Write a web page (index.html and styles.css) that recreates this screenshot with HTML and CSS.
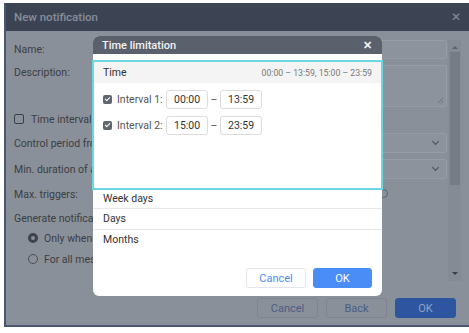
FILE: index.html
```html
<!DOCTYPE html>
<html lang="en">
<head>
    <meta charset="UTF-8">
    <title>New notification</title>
    <link rel="stylesheet" href="styles.css">
</head>
<body>
    <div class="win">
        <div class="win-head">
            <span class="win-title">New notification</span>
            <span class="win-close">&#x2715;</span>
        </div>
        <div class="win-body">
            <div class="form">
                <div class="row r-name"><span class="lbl">Name:</span><div class="field"></div></div>
                <div class="row r-desc"><span class="lbl">Description:</span><div class="field area"><span class="grip"></span></div></div>
                <div class="row r-check"><span class="lbl"><i class="box"></i>Time interval (hh:mm)</span></div>
                <div class="row r-sel"><span class="lbl">Control period from current time:</span><div class="field sel"><span class="chev"></span></div></div>
                <div class="row r-sel2"><span class="lbl">Min. duration of alarm state:</span><div class="field sel"><span class="chev"></span></div></div>
                <div class="row r-max"><span class="lbl">Max. triggers:</span><div class="field clear"><span class="clock"></span></div></div>
                <div class="row r-gen"><span class="lbl">Generate notification:</span></div>
                <div class="row r-radio"><span class="lbl"><i class="radio on"></i>Only when state changed</span></div>
                <div class="row r-radio2"><span class="lbl"><i class="radio"></i>For all messages</span></div>
            </div>
            <div class="scrollbar">
                <span class="arr up"></span>
                <span class="thumb"></span>
                <span class="arr down"></span>
            </div>
        </div>
        <div class="win-foot">
            <button class="btn">Cancel</button>
            <button class="btn">Back</button>
            <button class="btn primary">OK</button>
        </div>

        <div class="dlg">
            <div class="dlg-head">
                <span>Time limitation</span>
                <span class="dlg-close">&#x2715;</span>
            </div>
            <div class="dlg-body">
                <div class="sec active">
                    <div class="sec-head">
                        <span>Time</span>
                        <span class="summary">00:00 &ndash; 13:59, 15:00 &ndash; 23:59</span>
                    </div>
                    <div class="interval">
                        <i class="cb"></i><span class="ilbl">Interval 1:</span>
                        <span class="time">00:00</span><span class="dash">&ndash;</span><span class="time">13:59</span>
                    </div>
                    <div class="interval">
                        <i class="cb"></i><span class="ilbl">Interval 2:</span>
                        <span class="time">15:00</span><span class="dash">&ndash;</span><span class="time">23:59</span>
                    </div>
                </div>
                <div class="sec item first">Week days</div>
                <div class="sec item">Days</div>
                <div class="sec item last">Months</div>
            </div>
            <div class="dlg-foot">
                <button class="dbtn">Cancel</button>
                <button class="dbtn ok">OK</button>
            </div>
        </div>
    </div>
</body>
</html>
```

FILE: styles.css
```css
body {
    margin: 0;
    background: #fff;
    font-family: Roboto, "Liberation Sans", sans-serif;
    font-size: 10.5px;
}
.win {
    position: relative;
    margin: 3px 0 0 4px;
    width: 464px;
    height: 322px;
    background: #8a9099;
    border-left: 2px solid #4b5670;
    border-bottom: 2px solid #4b5670;
    display: flex;
    flex-direction: column;
}
.win-head {
    height: 28px;
    flex-shrink: 0;
    background: #3c4454;
    display: flex;
    align-items: center;
    justify-content: space-between;
    padding: 0 9px 0 8px;
    color: #878d97;
    font-size: 11.5px;
    font-weight: 500;
}
.win-close {
    font-size: 12px;
    color: #868c96;
}
.win-body {
    display: flex;
    padding: 9px 0 0 8px;
    height: 250px;
}
.form {
    width: 433px;
    color: #3a3e45;
}
.row {
    display: flex;
    align-items: center;
}
/* labels run under the popup, clip them where it starts */
.lbl {
    width: 79px;
    flex-shrink: 0;
    box-sizing: border-box;
    white-space: nowrap;
    overflow: hidden;
    display: flex;
    align-items: center;
}
.field {
    flex: 1;
    height: 19px;
    box-sizing: border-box;
    border: 1px solid #979da5;
    border-radius: 3px;
    background: #8d939c;
    position: relative;
}
.r-name { height: 19px; }
.r-desc { height: 42px; margin-top: 6px; align-items: flex-start; }
.r-desc .lbl { margin-top: 1px; }
.r-desc .field.area { height: 42px; }
.grip {
    position: absolute;
    right: 3px;
    bottom: 3px;
    width: 5px;
    height: 5px;
    background: linear-gradient(135deg, transparent 45%, #6c727b 45%, #6c727b 55%, transparent 55%, transparent 75%, #6c727b 75%, #6c727b 85%, transparent 85%);
}
.r-check { height: 18px; margin-top: 3px; }
.box {
    width: 8px;
    height: 8px;
    flex-shrink: 0;
    border: 1px solid #3a3e45;
    border-radius: 2px;
    margin-right: 7px;
}
.r-sel { height: 20px; margin-top: 5px; }
.r-sel2 { height: 20px; margin-top: 6px; }
.sel { height: 20px; }
.chev {
    position: absolute;
    right: 8px;
    top: 5px;
    width: 4px;
    height: 4px;
    border-right: 1.5px solid #4a4f57;
    border-bottom: 1.5px solid #4a4f57;
    transform: rotate(45deg);
}
.r-max { height: 18px; margin-top: 6px; }
.field.clear { border: none; background: none; }
.clock {
    position: absolute;
    left: 286px;
    top: 4px;
    width: 7px;
    height: 7px;
    border: 1px solid #5d626a;
    border-radius: 50%;
}
.r-gen { height: 18px; margin-top: 6px; }
.r-radio { height: 18px; margin-top: 2px; }
.r-radio2 { height: 18px; margin-top: 3px; }
.r-radio .lbl, .r-radio2 .lbl { padding-left: 14px; }
.radio {
    width: 8px;
    height: 8px;
    flex-shrink: 0;
    border: 1px solid #4a4f57;
    border-radius: 50%;
    margin-right: 6px;
    box-sizing: content-box;
}
.radio.on {
    width: 4px;
    height: 4px;
    border: 3px solid #3e434b;
}
.scrollbar {
    width: 13px;
    height: 241px;
    margin-left: 1px;
    background: #858b94;
    display: flex;
    flex-direction: column;
    align-items: center;
}
.arr {
    width: 0;
    height: 0;
    border-left: 3px solid transparent;
    border-right: 3px solid transparent;
    margin: 6px 0 3px;
}
.arr.up { border-bottom: 3px solid #5c626b; }
.arr.down { border-top: 3px solid #3a3e45; margin-top: auto; margin-bottom: 6px; }
.thumb {
    width: 10px;
    height: 133px;
    background: #767c85;
}
.win-foot {
    display: flex;
    justify-content: flex-end;
    gap: 8px;
    padding: 8px 14px 0 0;
}
.btn {
    width: 61px;
    height: 20px;
    border: 1px solid #7f858e;
    border-radius: 3px;
    background: #8a9099;
    color: #4a5d85;
    font-family: inherit;
    font-size: 11px;
    padding: 0;
}
.btn.primary {
    background: #2e56a0;
    border-color: #2e56a0;
    color: #8ea2c8;
}
.dlg {
    position: absolute;
    left: 87px;
    top: 33px;
    width: 289px;
    height: 260px;
    background: #fff;
    border-radius: 6px;
    display: flex;
    flex-direction: column;
    color: #333;
}
.dlg-head {
    height: 18px;
    background: #5b616c;
    border-radius: 6px 6px 0 0;
    display: flex;
    align-items: center;
    justify-content: space-between;
    padding: 0 10px 0 9px;
    color: #f2f2f2;
    font-size: 11px;
    font-weight: 500;
}
.dlg-close {
    font-size: 11px;
    font-weight: 700;
}
.dlg-body {
    padding-top: 6px;
    margin: 0 -1px;
}
.sec.active {
    border: 2px solid #6dd6e3;
    height: 126px;
}
.sec-head {
    height: 21px;
    background: #f4f4f5;
    display: flex;
    align-items: center;
    justify-content: space-between;
    padding: 0 9px;
}
.summary {
    color: #777;
    font-size: 8.7px;
}
.interval {
    display: flex;
    align-items: center;
    margin: 7px 0 0 9px;
    height: 19px;
}
.cb {
    width: 9px;
    height: 9px;
    border-radius: 2px;
    background: #5f6670;
    margin-right: 5px;
    position: relative;
}
.cb::after {
    content: "";
    position: absolute;
    left: 3px;
    top: 1px;
    width: 2px;
    height: 4px;
    border-right: 1.5px solid #fff;
    border-bottom: 1.5px solid #fff;
    transform: rotate(45deg);
}
.ilbl {
    width: 49px;
    color: #555;
}
.time {
    width: 42px;
    height: 19px;
    box-sizing: border-box;
    border: 1px solid #dcdcdc;
    border-radius: 3px;
    padding-left: 7px;
    line-height: 17px;
    color: #333;
}
.dash {
    width: 12px;
    text-align: center;
    color: #555;
}
.sec.item {
    height: 20px;
    border-bottom: 1px solid #e8e8e8;
    padding-left: 10px;
    line-height: 20px;
    margin: 0 1px;
}
.sec.item.first { height: 18px; line-height: 17px; }
.sec.item.last { border-bottom: none; }
.dlg-foot {
    margin-top: auto;
    display: flex;
    justify-content: flex-end;
    gap: 7px;
    padding: 0 10px 8px 0;
}
.dbtn {
    width: 60px;
    height: 20px;
    border: 1px solid #e2e5ea;
    border-radius: 3px;
    background: #fff;
    color: #4a8df6;
    font-family: inherit;
    font-size: 11px;
    padding: 0;
}
.dbtn.ok {
    width: 59px;
    background: #4a8df6;
    border-color: #4a8df6;
    color: #fff;
}
```
